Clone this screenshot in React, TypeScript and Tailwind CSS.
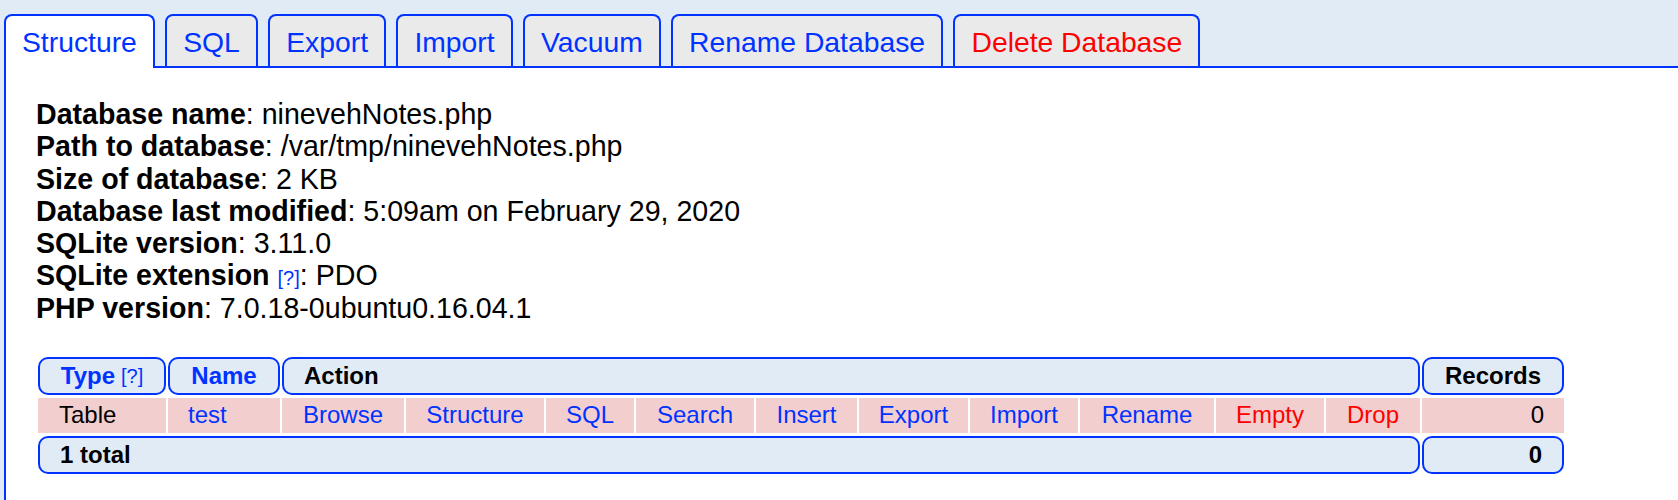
const tabs = [
  { label: 'Structure', active: true },
  { label: 'SQL' },
  { label: 'Export' },
  { label: 'Import' },
  { label: 'Vacuum' },
  { label: 'Rename Database' },
  { label: 'Delete Database', danger: true },
];

const info = [
  { label: 'Database name', value: 'ninevehNotes.php' },
  { label: 'Path to database', value: '/var/tmp/ninevehNotes.php' },
  { label: 'Size of database', value: '2 KB' },
  { label: 'Database last modified', value: '5:09am on February 29, 2020' },
  { label: 'SQLite version', value: '3.11.0' },
  { label: 'SQLite extension', value: 'PDO', help: true },
  { label: 'PHP version', value: '7.0.18-0ubuntu0.16.04.1' },
];

const actions = [
  { label: 'Browse' },
  { label: 'Structure' },
  { label: 'SQL' },
  { label: 'Search' },
  { label: 'Insert' },
  { label: 'Export' },
  { label: 'Import' },
  { label: 'Rename' },
  { label: 'Empty', danger: true },
  { label: 'Drop', danger: true },
];

const headCell =
  'flex items-center h-[38px] bg-[#e0ebf6] border-2 border-[#0033ff] rounded-[10px] font-bold';

export default function App() {
  return (
    <div
      className="min-h-[500px] bg-[#e0ebf6] text-black"
      style={{ fontFamily: '"Liberation Sans", Arial, sans-serif' }}
    >
      {/* tab bar */}
      <div className="flex items-start gap-[10.4px] pl-[4px] pt-[14px]">
        {tabs.map((t) => (
          <div
            key={t.label}
            className={`border-2 border-b-0 border-[#0033ff] rounded-t-[8px] px-[16px] pt-[10px] text-[28.3px] leading-[32px] whitespace-nowrap ${
              t.active ? 'relative z-10 bg-white pb-[10px] mb-[-2px]' : 'bg-[#eaeaea] pb-[8px]'
            } ${t.danger ? 'text-[#ff0000]' : 'text-[#0033ff]'}`}
          >
            {t.label}
          </div>
        ))}
      </div>

      {/* main panel */}
      <div className="ml-[4px] bg-white border-l-2 border-t-2 border-[#0033ff] p-[30px]">
        <div className="text-[28.6px] leading-[32.3px]">
          {info.map((row) => (
            <div key={row.label} className="whitespace-nowrap">
              <span className="font-bold">{row.label}</span>
              {row.help && (
                <>
                  {' '}
                  <span className="text-[20px] leading-none text-[#0033ff]">[?]</span>
                </>
              )}
              : {row.value}
            </div>
          ))}
        </div>

        <div className="mt-[32.5px] ml-[2px] grid grid-cols-[128px_112px_122px_138px_88px_118px_101px_109px_108px_134px_108px_94px_142px] gap-x-[2px] gap-y-[3px] text-[24px] whitespace-nowrap">
          {/* header */}
          <div className={`${headCell} justify-center text-[#0033ff]`}>
            Type<span className="ml-[6px] text-[20px] font-normal">[?]</span>
          </div>
          <div className={`${headCell} justify-center text-[#0033ff]`}>Name</div>
          <div className={`${headCell} col-span-10 pl-[20px]`}>Action</div>
          <div className={`${headCell} justify-center`}>Records</div>

          {/* table row */}
          <div className="flex items-center h-[35px] bg-[#f3cece] pl-[21px]">Table</div>
          <div className="flex items-center h-[35px] bg-[#f3cece] pl-[20px] text-[#0033ff]">test</div>
          {actions.map((a) => (
            <div
              key={a.label}
              className={`flex items-center justify-center h-[35px] bg-[#f3cece] ${
                a.danger ? 'text-[#ff0000]' : 'text-[#0033ff]'
              }`}
            >
              {a.label}
            </div>
          ))}
          <div className="flex items-center justify-end h-[35px] bg-[#f3cece] pr-[20px]">0</div>

          {/* footer */}
          <div className={`${headCell} col-span-12 pl-[20px]`}>1 total</div>
          <div className={`${headCell} justify-end pr-[20px]`}>0</div>
        </div>
      </div>
    </div>
  );
}
